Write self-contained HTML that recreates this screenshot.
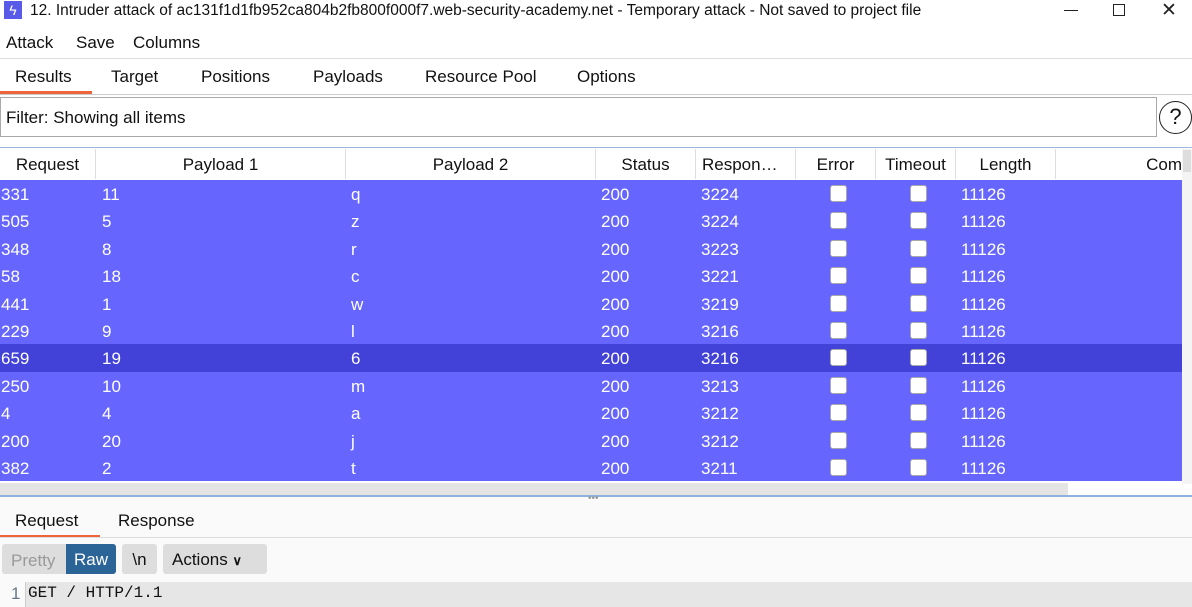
<!DOCTYPE html><html><head><style>
*{margin:0;padding:0;box-sizing:border-box}
body{width:1192px;height:607px;overflow:hidden;background:#fff;font-family:"Liberation Sans",sans-serif;font-size:17px;color:#111;position:relative}
.a{position:absolute;white-space:nowrap}
.row{position:absolute;left:0;width:1182px;height:27.4px;background:#6666ff;color:#fff}
.row span{position:absolute;top:5px}
.cb{position:absolute;top:5px;width:17px;height:17px;background:#fff;border:1px solid #aaa;border-radius:3px}
.hd{position:absolute;top:149px;height:30px;line-height:31px;text-align:center;border-right:1px solid #ddd;font-size:17px}
</style></head><body>
<div class="a" style="left:4px;top:1px;width:18px;height:18px;background:#5a5ae8;color:#fff;font-size:14px;text-align:center;line-height:18px">ϟ</div>
<div class="a" style="left:30px;top:2px;font-size:15.5px">12. Intruder attack of ac131f1d1fb952ca804b2fb800f000f7.web-security-academy.net - Temporary attack - Not saved to project file</div>
<div class="a" style="left:1064px;top:10px;width:14px;height:1px;background:#222"></div>
<div class="a" style="left:1113px;top:4px;width:12px;height:12px;border:1px solid #222"></div>
<div class="a" style="left:1161px;top:-1px;font-size:19px;color:#222">✕</div>
<div class="a" style="left:6px;top:33px">Attack</div>
<div class="a" style="left:76px;top:33px">Save</div>
<div class="a" style="left:133px;top:33px">Columns</div>
<div class="a" style="left:0;top:58px;width:1192px;height:1px;background:#ddd"></div>
<div class="a" style="left:15px;top:67px">Results</div>
<div class="a" style="left:111px;top:67px">Target</div>
<div class="a" style="left:201px;top:67px">Positions</div>
<div class="a" style="left:313px;top:67px">Payloads</div>
<div class="a" style="left:425px;top:67px">Resource Pool</div>
<div class="a" style="left:577px;top:67px">Options</div>
<div class="a" style="left:0;top:91px;width:92px;height:3px;background:#f0643c"></div>
<div class="a" style="left:0;top:94px;width:1192px;height:1px;background:#ccc"></div>
<div class="a" style="left:0;top:97px;width:1157px;height:40px;border:1px solid #aaa;background:#fff"></div>
<div class="a" style="left:6px;top:108px">Filter: Showing all items</div>
<div class="a" style="left:1159px;top:101px;width:33px;height:33px;border:1.5px solid #222;border-radius:50%;text-align:center;line-height:30px;font-size:22px">?</div>
<div class="a" style="left:0;top:147px;width:1192px;height:1px;background:#9bb8d8"></div>
<div class="hd" style="left:0;width:96px">Request</div>
<div class="hd" style="left:96px;width:250px">Payload 1</div>
<div class="hd" style="left:346px;width:250px">Payload 2</div>
<div class="hd" style="left:596px;width:100px">Status</div>
<div class="hd" style="left:696px;width:100px;text-align:left;padding-left:6px">Respon… <span style="color:#999;font-size:13px">﹀</span></div>
<div class="hd" style="left:796px;width:80px">Error</div>
<div class="hd" style="left:876px;width:80px">Timeout</div>
<div class="hd" style="left:956px;width:100px">Length</div>
<div class="hd" style="left:1056px;width:126px;text-align:right;border:none">Com</div>
<div class="a" style="left:1182px;top:149px;width:10px;height:335px;background:#f4f4f4"></div>
<div class="a" style="left:1183px;top:150px;width:8px;height:22px;background:#ddd"></div>
<div id="rows"></div>
<div class="a" style="left:0;top:483px;width:1068px;height:12px;background:#e4e4e4"></div>
<div class="a" style="left:0;top:495px;width:1192px;height:2px;background:#8ab4dc"></div>
<div class="a" style="left:0;top:497px;width:1192px;height:110px;background:#fafafa"></div>
<div class="a" style="left:588px;top:493px;color:#999;font-size:10px">•••</div>
<div class="a" style="left:15px;top:511px">Request</div>
<div class="a" style="left:118px;top:511px">Response</div>
<div class="a" style="left:0;top:535px;width:100px;height:3px;background:#f0643c"></div>
<div class="a" style="left:0;top:537px;width:1192px;height:1px;background:#ddd"></div>
<div class="a" style="left:2px;top:544px;width:114px;height:30px;background:#ddd;border-radius:3px"></div>
<div class="a" style="left:11px;top:551px;color:#999">Pretty</div>
<div class="a" style="left:66px;top:544px;width:50px;height:30px;background:#2b6496;color:#fff;text-align:center;line-height:31px;border-radius:0 3px 3px 0">Raw</div>
<div class="a" style="left:122px;top:544px;width:35px;height:30px;background:#ddd;border-radius:3px;text-align:center;line-height:31px">\n</div>
<div class="a" style="left:163px;top:544px;width:104px;height:30px;background:#ddd;border-radius:3px;line-height:31px;padding-left:9px">Actions <b style="font-size:13px">&#x2228;</b></div>
<div class="a" style="left:11px;top:584px;color:#678">1</div>
<div class="a" style="left:25px;top:582px;width:1167px;height:25px;background:#e6e6e6;border-left:1px solid #ccc"></div>
<div class="a" style="left:28px;top:584px;font-family:'Liberation Mono',monospace;font-size:16px">GET / HTTP/1.1</div>
<script>
var d=[["331","11","q","3224"],["505","5","z","3224"],["348","8","r","3223"],["58","18","c","3221"],["441","1","w","3219"],["229","9","l","3216"],["659","19","6","3216"],["250","10","m","3213"],["4","4","a","3212"],["200","20","j","3212"],["382","2","t","3211"]];
var h="";d.forEach(function(r,i){h+='<div class="row" style="top:'+(180+i*27.4)+'px;'+(i==6?'background:#4242d8':'')+'"><span style="left:1px">'+r[0]+'</span><span style="left:102px">'+r[1]+'</span><span style="left:351px">'+r[2]+'</span><span style="left:601px">200</span><span style="left:701px">'+r[3]+'</span><div class="cb" style="left:830px"></div><div class="cb" style="left:910px"></div><span style="left:961px">11126</span></div>'});
document.getElementById("rows").innerHTML=h;
</script>
</body></html>
